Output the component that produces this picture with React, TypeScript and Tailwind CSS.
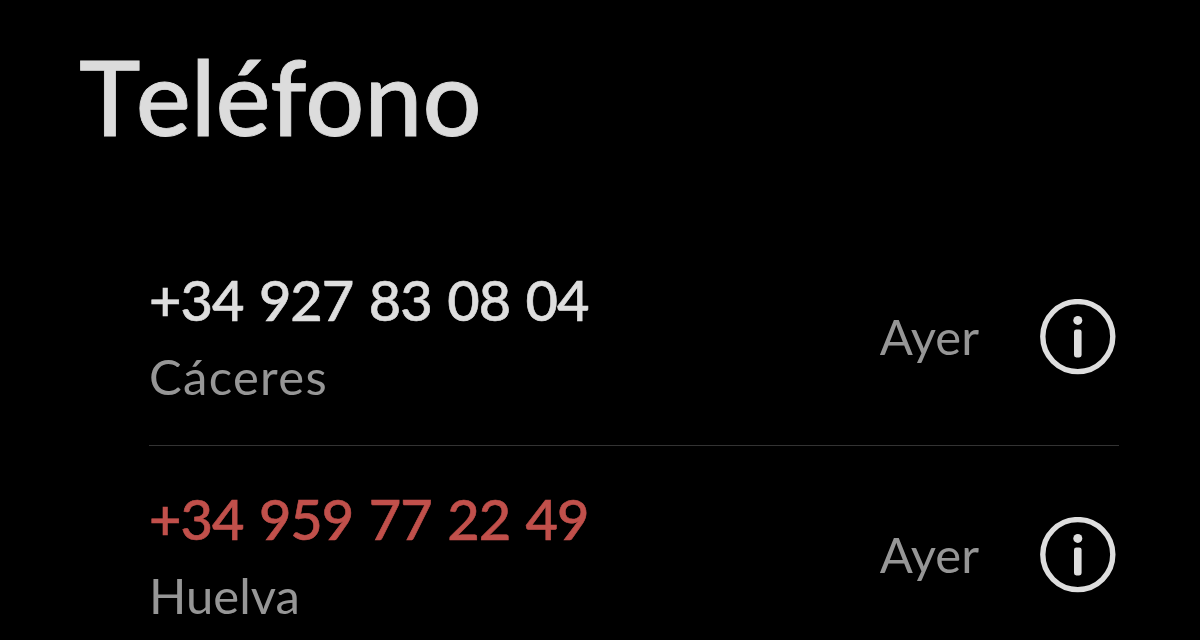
type Call = {
  number: string;
  place: string;
  when: string;
  missed?: boolean;
  placeClass?: string;
};

const calls: Call[] = [
  { number: "+34 927 83 08 04", place: "Cáceres", when: "Ayer", placeClass: "tracking-[1.3px]" },
  { number: "+34 959 77 22 49", place: "Huelva", when: "Ayer", missed: true },
];

function InfoIcon() {
  return (
    <svg viewBox="0 0 76 76" className="w-[76px] h-[76px] shrink-0" fill="none">
      <circle cx="37.8" cy="37.6" r="35" stroke="currentColor" strokeWidth="5.4" />
      <circle cx="37.8" cy="21.4" r="4.5" fill="currentColor" />
      <rect x="34" y="30.4" width="7.6" height="28" rx="2.4" fill="currentColor" />
    </svg>
  );
}

function CallRow({ call }: { call: Call }) {
  return (
    <li className="flex h-[218.5px] items-center border-b border-[#333333] pr-[3px]">
      <div className="flex-1">
        <p
          className={`pt-px whitespace-pre text-[56px] leading-[56px] font-medium tracking-[-1px] [word-spacing:2.3px] [-webkit-text-stroke:0.6px] ${
            call.missed ? "text-[#c1504b]" : "text-[#dedede]"
          }`}
        >
          {call.number}
        </p>
        <p className={`mt-[24px] text-[49px] leading-[48px] text-[#969696] ${call.placeClass ?? ""}`}>
          {call.place}
        </p>
      </div>

      <span className="mr-[61px] text-[49px] leading-[48px] text-[#969696]">{call.when}</span>

      <button className="pt-[2px] text-[#dedede]" aria-label="Info">
        <InfoIcon />
      </button>
    </li>
  );
}

export default function App() {
  return (
    <div className="h-screen overflow-hidden bg-black font-['Lato','Liberation_Sans',sans-serif]">
      <h1 className="pl-[79px] pt-[44px] text-[104px] leading-[104px] font-medium text-[#dcdcdc] [-webkit-text-stroke:0.8px]">
        <span className="tracking-[-5px]">T</span>eléfono
      </h1>

      {/* Recent calls */}
      <ul className="mt-[79px] ml-[149px] mr-[81px]">
        {calls.map((call) => (
          <CallRow key={call.number} call={call} />
        ))}
      </ul>
    </div>
  );
}
